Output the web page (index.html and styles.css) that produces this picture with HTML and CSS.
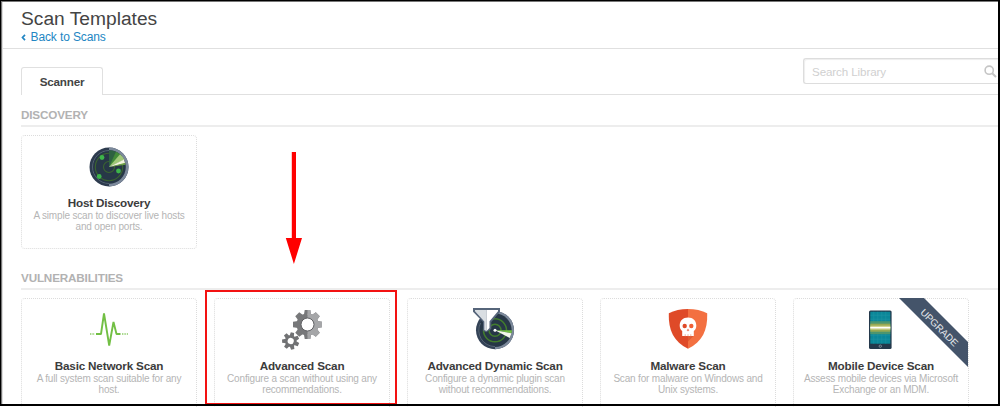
FILE: index.html
```
<!DOCTYPE html>
<html lang="en">
<head>
<meta charset="utf-8">
<title>Scan Templates</title>
<link rel="stylesheet" href="styles.css">
</head>
<body>
<div class="window">
  <header class="page-header">
    <h1 class="page-title">Scan Templates</h1>
    <a class="back-link"><svg class="chevron" viewBox="0 0 5 7"><path d="M4 .8 1.5 3.5 4 6.2" fill="none" stroke="currentColor" stroke-width="1.7"/></svg>Back to Scans</a>
  </header>
  <nav class="tab-bar">
    <div class="tab">Scanner</div>
    <div class="tab-line">
      <div class="search"><span>Search Library</span><svg class="search-icon" viewBox="0 0 13 13"><circle cx="5.2" cy="5.2" r="4.1" fill="none" stroke="currentColor" stroke-width="1.6"/><path d="m8.2 8.2 3.8 3.8" stroke="currentColor" stroke-width="2"/></svg></div>
    </div>
  </nav>
  <section class="group discovery">
    <h2 class="group-title">DISCOVERY</h2>
    <div class="cards">
      <article class="card">
        <svg class="icon" viewBox="0 0 40 40">
          <circle cx="20" cy="20" r="19.5" fill="#2d3b4e"/><path d="M20 .5a19.5 19.5 0 0 1 0 39z" fill="#7c899b"/>
          <circle cx="20" cy="20" r="16.8" fill="#273747"/>
          <path d="M20 3.5A16.5 16.5 0 0 0 20 36.5" fill="none" stroke="#526172" stroke-width="1"/>
          <g fill="none" stroke="#3b652f" stroke-width="1.1"><circle cx="20" cy="20" r="13.7"/><circle cx="20" cy="20" r="5.5"/></g>
          <path d="M20 20V3.2a17 17 0 0 1 8.5 2.2z" fill="#2e6141"/><path d="m20 20 7-15.2a17 17 0 0 1 5.5 4z" fill="#438a39"/><path d="m20 20 11-12.8a17 17 0 0 1 4.5 5.6z" fill="#a0c878"/><path d="m20 20 15-7.4 1.2 3.8z" fill="#f3f5dd"/><path d="m20 20 16.2-4.2.4 2z" fill="#6d9f47"/>
          <g fill="#3db54a"><circle cx="13" cy="10.5" r="2.4"/><circle cx="29.5" cy="24" r="2.4"/><circle cx="10.2" cy="29.5" r="2.4"/></g>
        </svg>
        <h3 class="card-title">Host Discovery</h3>
        <p class="card-text">A simple scan to discover live hosts<br>and open ports.</p>
      </article>
    </div>
  </section>
  <section class="group">
    <h2 class="group-title">VULNERABILITIES</h2>
    <div class="cards">
      <article class="card">
        <svg class="icon" viewBox="0 0 40 40"><path d="M7 24h5L15 3.5l5.2 32L24.5 12l3 12h4" fill="none" stroke="#72bf44" stroke-width="1.9" stroke-linejoin="bevel"/><path d="M1 24h5m27 0h6" stroke="#8dcc68" stroke-width="1.3" stroke-dasharray="1.4 1"/></svg>
        <h3 class="card-title">Basic Network Scan</h3>
        <p class="card-text">A full system scan suitable for any<br>host.</p>
      </article>
      <article class="card">
        <svg class="icon" viewBox="0 0 40 40">
          <defs>
            <g id="cog"><path id="tooth" d="m-2.8-14.5h5.6l.8 5h-7.2z"/><use href="#tooth" transform="rotate(45)"/><use href="#tooth" transform="rotate(90)"/><use href="#tooth" transform="rotate(135)"/><use href="#tooth" transform="rotate(180)"/><use href="#tooth" transform="rotate(225)"/><use href="#tooth" transform="rotate(270)"/><use href="#tooth" transform="rotate(315)"/><circle r="11"/></g>
            <clipPath id="right-half"><path d="M0-16h16v32H0z"/></clipPath>
            <path id="small-tooth" d="M-1.7-8.6h3.4l.5 4h-4.4z"/>
          </defs>
          <g transform="translate(25.5 14.5)"><use href="#cog" fill="#77787a"/><g clip-path="url(#right-half)"><use href="#cog" fill="#a5a6a8"/></g><circle r="6.5" fill="#fff" stroke="#606164" stroke-width="1"/></g>
          <g transform="translate(8.7 31) rotate(12)" fill="#717274"><circle r="5.8"/><use href="#small-tooth"/><use href="#small-tooth" transform="rotate(51.4)"/><use href="#small-tooth" transform="rotate(102.9)"/><use href="#small-tooth" transform="rotate(154.3)"/><use href="#small-tooth" transform="rotate(205.7)"/><use href="#small-tooth" transform="rotate(257.1)"/><use href="#small-tooth" transform="rotate(308.6)"/><circle r="3.1" fill="#fff"/></g>
        </svg>
        <h3 class="card-title">Advanced Scan</h3>
        <p class="card-text">Configure a scan without using any<br>recommendations.</p>
      </article>
      <article class="card">
        <svg class="icon" viewBox="0 0 40 40">
          <circle cx="20" cy="20.3" r="19" fill="#344357"/><path d="M20 1.3a19 19 0 0 1 0 38z" fill="#7c899b"/><circle cx="20" cy="20.3" r="16.7" fill="#273747"/>
          <g fill="none" stroke="#427d2d" stroke-width="1.5"><circle cx="20" cy="20.3" r="11.5"/><circle cx="20" cy="20.3" r="6"/></g>
          <path d="M5.5 13A16.3 16.3 0 0 0 20 36.6" fill="none" stroke="#566475"/>
          <path d="M20 20.3h17l-.5 3z" fill="#72bf44"/><path d="m20 20.3 16.5 3-1.7 4.7z" fill="#f4f7ec"/>
          <path d="M-2-2h27v3.8L16.3 12v7l-5 3.3-3.3-1.5V12L-2 1.8z" fill="#56657a"/>
          <path d="M0 0h11.6v21L9.3 20v-8.6L0 1.3z" fill="#d9dee2"/><path d="M11.6 0H23v1.3l-8.5 10V18l-2.9 3z" fill="#fff"/><circle cx="20" cy="20.3" r="1.5" fill="#fff"/>
        </svg>
        <h3 class="card-title">Advanced Dynamic Scan</h3>
        <p class="card-text">Configure a dynamic plugin scan<br>without recommendations.</p>
      </article>
      <article class="card">
        <svg class="icon" viewBox="0 0 40 40">
          <path d="M20-1C13-1 6 .5.8 3.3.2 20.5 6 32 20 38.7z" fill="#df4a28"/><path d="M20-1c7 0 14 1.5 19.2 4.3C39.8 20.5 34 32 20 38.7z" fill="#f37041"/><path d="M20 25.5h6l-6 6z" fill="#df5b32"/>
          <path d="M20 7.5c5 0 8.3 3.2 8.3 8 0 2.4-.8 4.3-2.5 5.5v5H14.2v-5c-1.7-1.2-2.5-3.1-2.5-5.5 0-4.8 3.3-8 8.3-8z" fill="#fff"/><circle cx="16.7" cy="16" r="2.2" fill="#df4a28"/><circle cx="23.3" cy="16" r="2.2" fill="#f06035"/><path d="m20 18.9.9 1.8h-1.8zM17.2 24.2V26.5m2.8-2.3v2.3m2.8-2.3v2.3" fill="#df4a28" stroke="#e88469" stroke-width=".6"/>
        </svg>
        <h3 class="card-title">Malware Scan</h3>
        <p class="card-text">Scan for malware on Windows and<br>Unix systems.</p>
      </article>
      <article class="card">
        <svg class="icon" viewBox="0 0 40 40">
          <g transform="translate(-.7 -1.3)"><rect x="8.7" y="1.7" width="22.6" height="38.6" rx="1.5" fill="#24384b"/><path d="M10 3h20v32H10z" fill="#0a8799"/>
          <path d="M13.5 3v32m4-32v32m4-32v32m4-32v32M10 6.5h20m-20 4h20m-20 16h20m-20 4h20" stroke="#2497a6" stroke-width=".5"/>
          <path d="M10 12.5h20v13H10z" fill="#4c956f"/><path d="M10 15h20v8H10z" fill="#99a952"/><path d="M10 17h20v4H10z" fill="#d0d391"/><path d="M10 18.3h20v1.4H10z" fill="#fff"/><circle cx="20" cy="37.5" r="1.2" fill="none" stroke="#9ca7b1" stroke-width=".7"/></g>
        </svg>
        <h3 class="card-title">Mobile Device Scan</h3>
        <p class="card-text">Assess mobile devices via Microsoft<br>Exchange or an MDM.</p>
        <div class="ribbon"><span>UPGRADE</span></div>
      </article>
    </div>
  </section>
  <svg class="arrow" viewBox="0 0 18 112"><path d="M6.8 0h4.2v86H17L8.9 112 .8 86h6z" fill="#f00"/></svg>
  <div class="highlight"></div>
</div>
</body>
</html>
```
FILE: styles.css
```
* { box-sizing: border-box; }
body { margin: 0; background: #fff; font-family: "Liberation Sans", Arial, sans-serif; }
h1, h2, h3, p { margin: 0; }
.window { position: relative; width: 1000px; height: 407px; overflow: hidden; padding-left: 2px; }
.window::after { content: ""; position: absolute; inset: 0 0 1px; border: 1.5px solid #000; border-width: 1px 2px 2px 1px; box-shadow: inset 1px 1px 0 #777, inset 2px 0 0 #ddd; }
.page-header { height: 49px; padding: 8px 0 0 19px; border-bottom: 1px solid #e0e0e0; }
.page-title { font-size: 19.2px; line-height: 22px; font-weight: 400; color: #444; }
.back-link { display: flex; align-items: center; gap: 4.5px; height: 15px; font-size: 12px; letter-spacing: -.12px; line-height: 15px; color: #2286c3; }
.chevron { width: 5px; height: 7px; }
.tab-bar { display: flex; height: 46px; padding-left: 19px; align-items: flex-end; }
.tab { width: 82px; height: 28px; border: 1px solid #e0e0e0; border-bottom: 0; border-radius: 3px 3px 0 0; text-align: center; font-size: 11.7px; letter-spacing: -.2px; font-weight: 700; line-height: 27px; color: #444; }
.tab-line { flex: 1; height: 46px; border-bottom: 1px solid #e0e0e0; padding: 9px 0 0 700px; }
.search { display: flex; align-items: center; justify-content: space-between; height: 26px; padding: 0 3px 0 8px; border: 1px solid #ddd; border-right: 0; border-radius: 3px 0 0 3px; box-shadow: inset 1px 1px 1px #eee; font-size: 11.6px; letter-spacing: -.1px; color: #d0d0d0; }
.search-icon { width: 13px; height: 13px; color: #c5c5c5; }
.group { padding-left: 19px; }
.discovery { height: 163px; }
.group-title { height: 32px; border-bottom: 2px solid #ededed; padding-top: 12px; font-size: 11.7px; letter-spacing: -.17px; line-height: 15px; color: #b2b2b2; }
.cards { display: flex; gap: 17px; padding-top: 8px; }
.card { position: relative; flex: none; width: 176px; height: 114px; padding-top: 11px; border: 1px dotted #dcdcdc; border-radius: 4px; text-align: center; }
.icon { display: block; width: 40px; height: 40px; margin: 0 auto; overflow: visible; }
.card-title { margin-top: 9px; font-size: 11.7px; letter-spacing: -.18px; line-height: 14px; color: #3c3c3c; }
.card-text { font-size: 10px; letter-spacing: -.17px; line-height: 11.3px; color: #b5b5b5; }
.ribbon { position: absolute; top: -1px; right: 0; width: 69px; height: 69px; background: #44546a; clip-path: polygon(0 0, 25px 0, 100% 44px, 100% 100%); }
.ribbon span { position: absolute; left: 10px; top: 24px; width: 60px; transform: rotate(45deg); font-size: 9.8px; line-height: 12px; color: #e6e9ed; }
.arrow { position: absolute; left: 285px; top: 152px; width: 18px; height: 112px; }
.highlight { position: absolute; left: 205px; top: 290px; width: 192px; height: 115px; border: 2px solid #f31212; }
```
